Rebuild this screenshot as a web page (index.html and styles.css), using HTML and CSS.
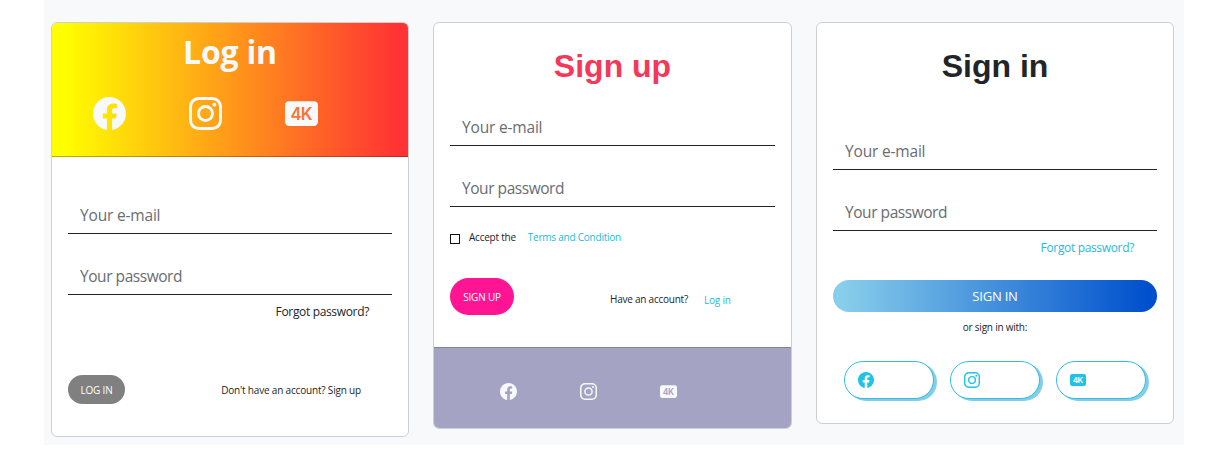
FILE: index.html
```html
<!DOCTYPE html>
<html lang="en">
<head>
<meta charset="utf-8">
<title>Login cards</title>
<link rel="stylesheet" href="styles.css">
</head>
<body>
<svg class="defs" width="0" height="0">
  <symbol id="facebook" viewBox="0 0 16 16"><path d="M16 8.049c0-4.446-3.582-8.05-8-8.05C3.58 0-.002 3.603-.002 8.05c0 4.017 2.926 7.347 6.75 7.951v-5.625h-2.03V8.05H6.75V6.275c0-2.017 1.195-3.131 3.022-3.131.876 0 1.791.157 1.791.157v1.98h-1.009c-.993 0-1.303.621-1.303 1.258v1.51h2.218l-.354 2.326H9.25V16c3.824-.604 6.75-3.934 6.75-7.951z"/></symbol>
  <symbol id="instagram" viewBox="0 0 16 16"><rect x=".72" y=".72" width="14.56" height="14.56" rx="4" fill="none" stroke="currentColor" stroke-width="1.44"/><circle cx="8" cy="8" r="3.39" fill="none" stroke="currentColor" stroke-width="1.44"/><circle cx="12.27" cy="3.73" r=".96"/></symbol>
</svg>
<main class="page">
  <section class="card login">
    <header class="banner">
      <h2 class="title">Log in</h2>
      <div class="icons icons-large">
        <svg class="icon"><use href="#facebook"/></svg>
        <svg class="icon"><use href="#instagram"/></svg>
        <svg class="icon" viewBox="0 0 16 16"><rect y="2" width="16" height="12" rx="2"/><text class="badge-text" x="2.7" y="11" textLength="10.6" lengthAdjust="spacing">4K</text></svg>
      </div>
    </header>
    <div class="body">
      <input class="field" type="email" placeholder="Your e-mail">
      <input class="field password" type="password" placeholder="Your password">
      <a class="forgot">Forgot password?</a>
      <div class="actions">
        <button class="btn">LOG IN</button>
        <span class="small">Don't have an account? Sign up</span>
      </div>
    </div>
  </section>

  <section class="card signup">
    <div class="body">
      <h2 class="title">Sign up</h2>
      <input class="field" type="email" placeholder="Your e-mail">
      <input class="field password" type="password" placeholder="Your password">
      <div class="terms"><span class="check"></span><span class="small accept">Accept the</span><a class="small link">Terms and Condition</a></div>
      <div class="actions">
        <button class="btn">SIGN UP</button>
        <span class="small have">Have an account?</span>
        <a class="small link">Log in</a>
      </div>
    </div>
    <footer class="footer icons">
      <svg class="icon"><use href="#facebook"/></svg>
      <svg class="icon"><use href="#instagram"/></svg>
      <svg class="icon" viewBox="0 0 16 16"><rect y="2" width="16" height="12" rx="2"/><text class="badge-text" x="2.7" y="11" textLength="10.6" lengthAdjust="spacing">4K</text></svg>
    </footer>
  </section>

  <section class="card signin">
    <div class="body">
      <h2 class="title">Sign in</h2>
      <input class="field" type="email" placeholder="Your e-mail">
      <input class="field password" type="password" placeholder="Your password">
      <a class="forgot link">Forgot password?</a>
      <button class="btn">SIGN IN</button>
      <p class="small or">or sign in with:</p>
      <div class="pills">
        <button class="pill"><svg class="icon"><use href="#facebook"/></svg></button>
        <button class="pill"><svg class="icon"><use href="#instagram"/></svg></button>
        <button class="pill"><svg class="icon" viewBox="0 0 16 16"><rect y="2" width="16" height="12" rx="2"/><text class="badge-text" x="2.7" y="11" textLength="10.6" lengthAdjust="spacing">4K</text></svg></button>
      </div>
    </div>
  </section>
</main>
</body>
</html>
```

FILE: styles.css
```css
* { box-sizing: border-box; }
body { margin: 0; background: #fff; color: #212529; font-family: "Open Sans", sans-serif; }
.defs { position: absolute; }
.page { display: flex; align-items: flex-start; gap: 24px; width: 1140px; height: 445px; margin-left: 44px; padding: 22px 9px 0 7px; background: #f8f9fb; }
.card { display: flex; flex-direction: column; flex: 0 0 358px; background: #fff; border: 1px solid #cdd0d2; border-radius: 6px; overflow: hidden; }
.login { height: 415px; }
.signup { flex-basis: 359px; height: 407px; }
.signin { height: 402px; }
.body { display: flex; flex-direction: column; padding: 0 16px; }
.title { margin: 0; text-align: center; font: bold 32px/38px "Liberation Sans", sans-serif; }

.field { width: 100%; height: 38px; margin: 0 0 23px; padding: 1px 12px 0; border: 0; border-bottom: 1px solid #212529; background: transparent; outline: 0; font: 15.5px "Open Sans", sans-serif; letter-spacing: -.18px; }
.password { letter-spacing: -.45px; }
.field::placeholder { color: #686d71; opacity: 1; }
.forgot { align-self: flex-end; margin: -15px 23px 0 0; font-size: 12px; line-height: 18px; letter-spacing: -.34px; }
.small { font-size: 10px; line-height: 15px; letter-spacing: -.23px; white-space: nowrap; }
.link { color: #27b9dc; }
.btn { padding: 0; border: 0; border-radius: 50px; color: #fff; font: 10px "Open Sans", sans-serif; letter-spacing: -.2px; }
.actions { display: flex; align-items: center; }
.icon { display: block; width: 16px; height: 16px; fill: currentColor; }
.icons { display: flex; color: #f8f9fa; }
.badge-text { font: 600 8.1px Inter, sans-serif; fill: var(--cut); }

.banner { height: 134px; padding-top: 10px; border-bottom: 1px solid rgba(60, 30, 20, .35); background: linear-gradient(to right, #ff0 3%, #f33 97%); color: #f8f9fa; --cut: #f97435; }
.banner .title { font: bold 32px/38px "Open Sans", sans-serif; letter-spacing: -.2px; }
.icons-large { gap: 63px; padding: 26px 0 0 41px; }
.icons-large .icon { width: 33px; height: 33px; }
.login .body { padding-top: 39px; }
.login .actions { justify-content: space-between; margin-top: 54px; padding-right: 31px; }
.login .btn { width: 57px; height: 29px; background: gray; }
.login .small { margin-top: 1px; letter-spacing: -.18px; }

.signup .title { margin: 24px 0 23px; color: #f53859; }
.terms { display: flex; align-items: center; height: 16px; }
.terms .small { margin-top: -1px; }
.check { width: 10px; height: 10px; margin: 2px 9px 0 0; border: 1px solid #111; }
.terms .accept { margin-right: 12px; }
.signup .actions { height: 37px; margin-top: 32px; }
.signup .btn { width: 64px; height: 37px; background: #ff1493; }
.have { margin: 6px 16px 0 96px; }
.signup .actions .link { margin-top: 8px; }
.footer { height: 81px; margin-top: auto; padding: 35px 0 0 66px; gap: 63px; border-top: 1px solid #85858f; background: #a5a3c4; --cut: #a5a3c4; }
.footer .icon { width: 17px; height: 17px; }

.signin .title { margin: 24px 0 47px; }
.signin .btn { height: 32px; margin-top: 23px; background: linear-gradient(to right, skyblue 3%, #0050cd 97%); font-size: 13px; }
.or { margin: 8px 0 0; text-align: center; }
.pills { display: flex; gap: 16px; padding: 26px 0 0 11px; }
.pill { width: 90px; height: 38px; padding: 0 0 0 13px; border: 1px solid #2fbfdc; border-radius: 50px; background: #fff; box-shadow: 3px 2px 0 #82cdea; color: #1fc3e8; --cut: #fff; }
```
